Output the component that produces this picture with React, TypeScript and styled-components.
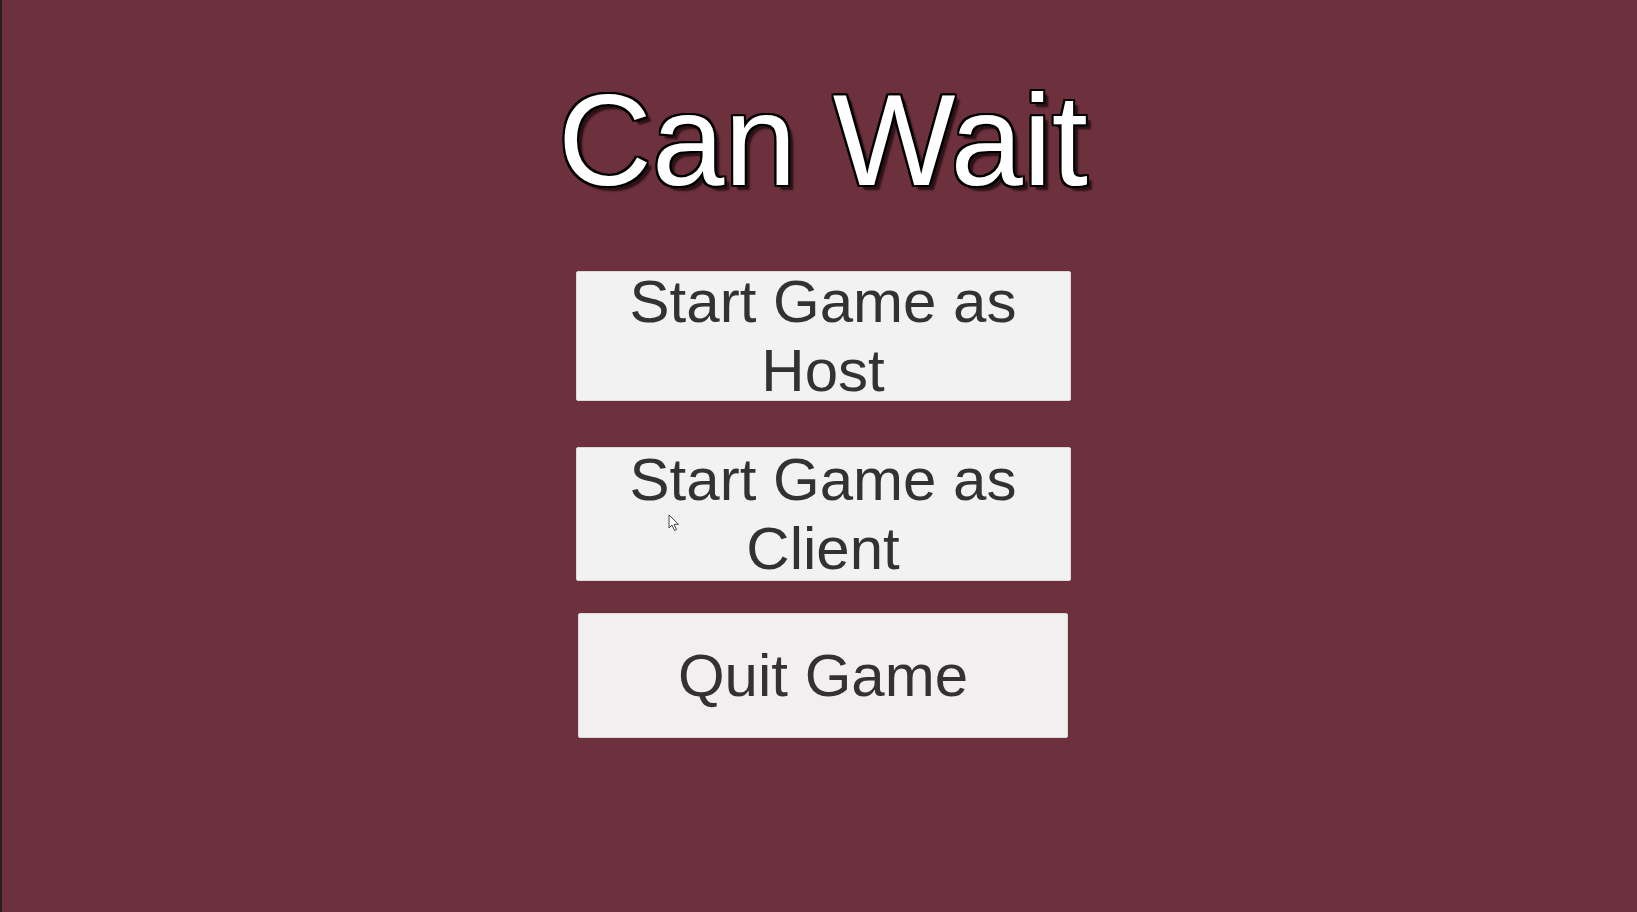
import React from "react";
import styled, { createGlobalStyle } from "styled-components";

const GlobalStyle = createGlobalStyle`
  html, body {
    margin: 0;
    padding: 0;
    background: #6d303d;
    width: 100%;
    height: 100%;
    overflow: hidden;
  }
  #root {
    height: 100%;
  }
`;

const Screen = styled.div`
  position: relative;
  display: flex;
  flex-direction: row;
  width: 1637px;
  height: 912px;
  background: #6d303d;
  font-family: "Liberation Sans", Arial, sans-serif;
`;

const EdgeStrip = styled.div`
  width: 2px;
  flex: 0 0 2px;
  background: #2b1d21;
`;

const Menu = styled.div`
  flex: 1;
  display: flex;
  flex-direction: column;
  align-items: center;
  padding-top: 75px;
  padding-left: 7px;
`;

const Title = styled.h1`
  margin: 0;
  font-size: 130px;
  line-height: 130px;
  font-weight: 400;
  color: #ffffff;
  white-space: nowrap;
  text-shadow:
    -2px -2px 0 #000, 2px -2px 0 #000, -2px 2px 0 #000, 2px 2px 0 #000,
    0 -2px 0 #000, 0 2px 0 #000, -2px 0 0 #000, 2px 0 0 #000,
    4px 4px 1px #2a1418, 5px 5px 2px rgba(30, 10, 14, 0.8);
`;

const MenuButton = styled.button<{ $w: number; $h: number; $mt: number; $bg?: string }>`
  display: flex;
  align-items: center;
  justify-content: center;
  box-sizing: border-box;
  width: ${(p) => p.$w}px;
  height: ${(p) => p.$h}px;
  margin-top: ${(p) => p.$mt}px;
  padding: 0;
  border: 1px solid #dcd7d8;
  border-radius: 2px;
  background: ${(p) => p.$bg ?? "#f3f2f2"};
  color: #323232;
  font-family: "Liberation Sans", Arial, sans-serif;
  font-size: 60px;
  line-height: 69px;
  text-align: center;
  cursor: default;
  overflow: visible;
`;

const Label = styled.span`
  display: block;
  width: 100%;
`;

const Cursor = styled.svg`
  position: absolute;
  left: 668px;
  top: 514px;
  width: 12px;
  height: 18px;
`;

export default function App() {
  return (
    <>
      <GlobalStyle />
      <Screen>
        <EdgeStrip />
        <Menu>
          <Title>Can Wait</Title>
          <MenuButton $w={495} $h={130} $mt={66}>
            <Label>
              Start Game as
              <br />
              Host
            </Label>
          </MenuButton>
          <MenuButton $w={495} $h={134} $mt={46}>
            <Label>
              Start Game as
              <br />
              Client
            </Label>
          </MenuButton>
          <MenuButton $w={490} $h={125} $mt={32} $bg="#f3eeef">
            <Label>Quit Game</Label>
          </MenuButton>
        </Menu>
        <Cursor viewBox="0 0 12 18">
          <path
            d="M1 1 L1 14 L4 11 L6.5 16.5 L8.5 15.6 L6 10.3 L10.5 10.3 Z"
            fill="#ffffff"
            stroke="#444"
            strokeWidth="1"
            strokeLinejoin="round"
          />
        </Cursor>
      </Screen>
    </>
  );
}
